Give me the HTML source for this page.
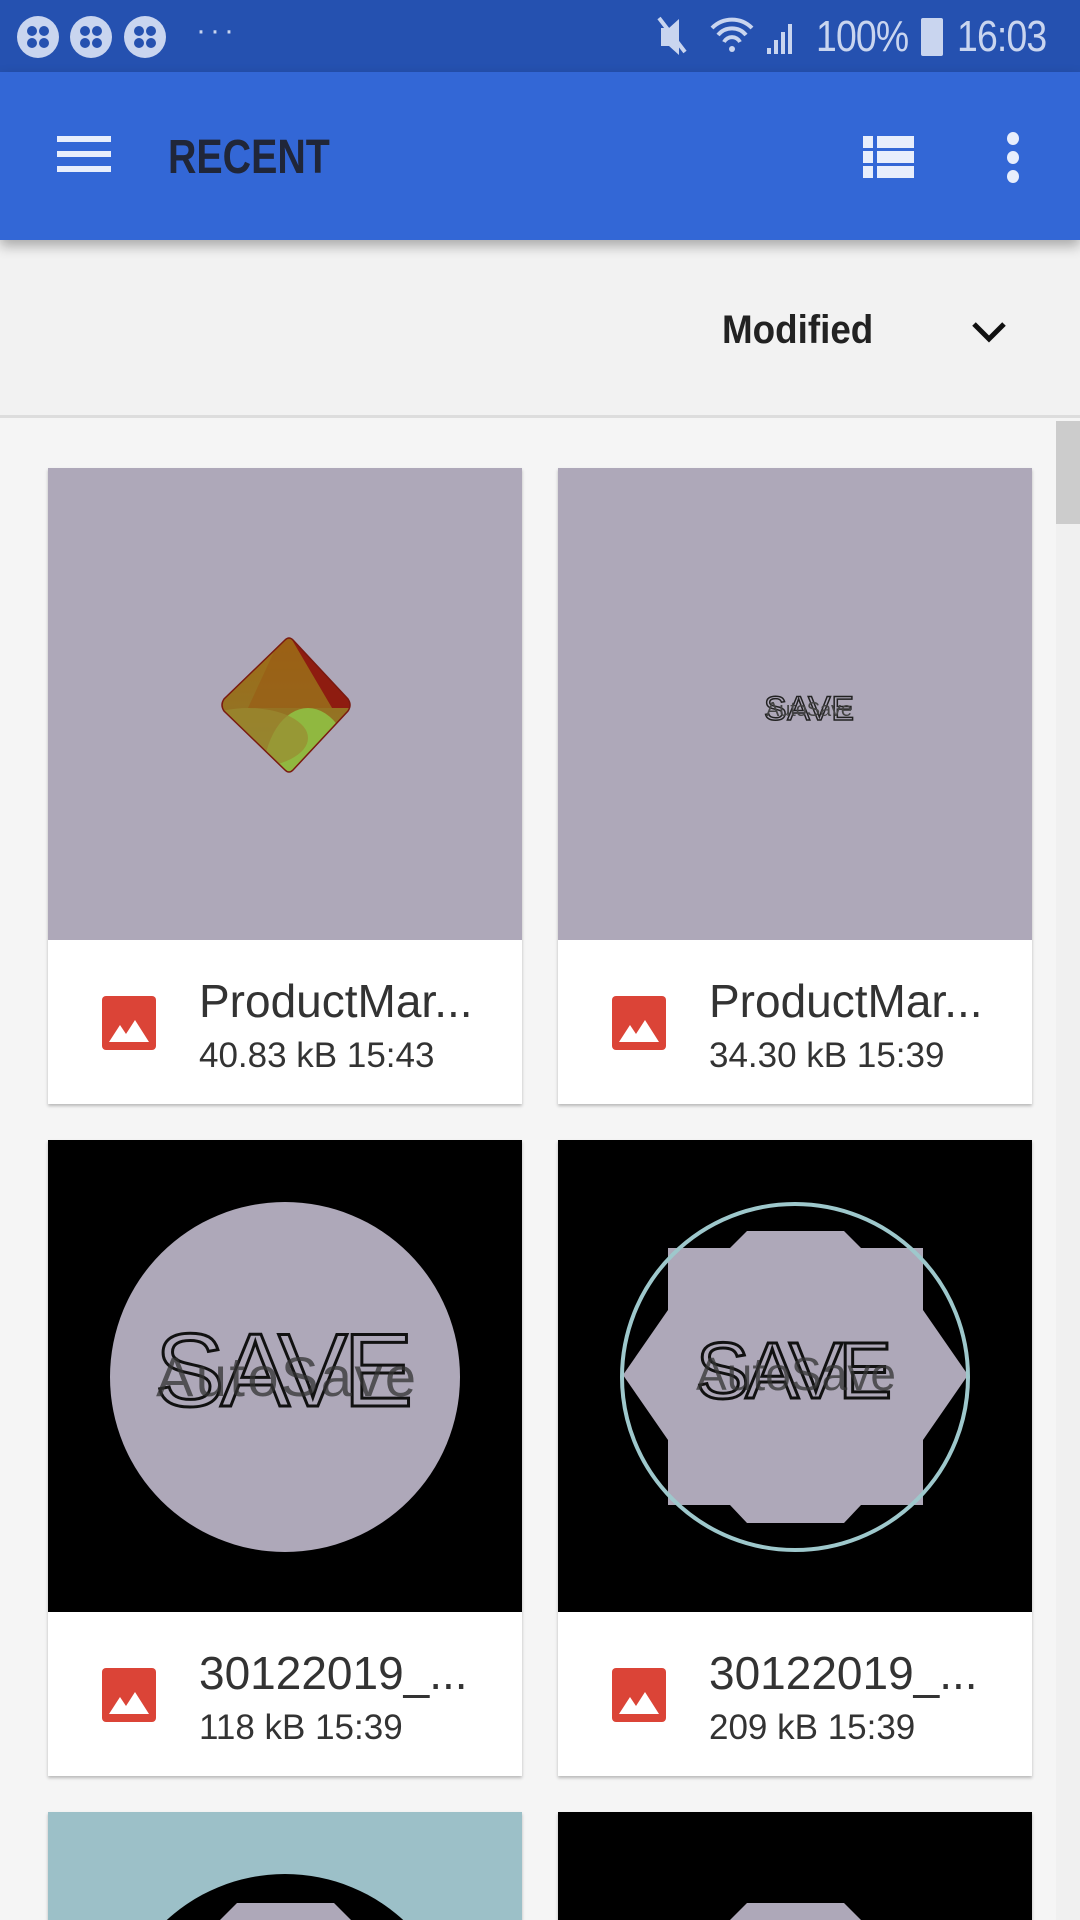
<!DOCTYPE html>
<html><head><meta charset="utf-8"><style>
*{margin:0;padding:0;box-sizing:border-box}
body{width:1080px;height:1920px;overflow:hidden;background:#f5f5f5;font-family:"Liberation Sans",sans-serif;position:relative}
.sb{position:absolute;left:0;top:0;width:1080px;height:72px;background:#2551b0;color:#c9d5ef}
.tb{position:absolute;left:0;top:72px;width:1080px;height:168px;background:#3367d6;box-shadow:0 6px 12px rgba(0,0,0,.3);z-index:2}
.sort{position:absolute;left:0;top:240px;width:1080px;height:178px;background:#f2f2f2;border-bottom:3px solid #ddd}
.card{position:absolute;width:474px;background:#fff;box-shadow:0 2px 3px rgba(0,0,0,.25);overflow:hidden}
.img{position:absolute;left:0;top:0;width:474px;height:472px;overflow:hidden}
.ic{position:absolute;left:54px;width:54px;height:54px;background:#db4437;border-radius:4px}
.t{position:absolute;left:151px;font-size:46px;color:#333;white-space:nowrap}
.s{position:absolute;left:151px;font-size:35px;color:#333;white-space:nowrap}
</style></head><body>
<div class="sb">
 <svg width="180" height="72" style="position:absolute;left:14px;top:0">
  <g fill="#c9d5ef"><ellipse cx="24" cy="37" rx="21" ry="21"/><ellipse cx="77" cy="37" rx="21" ry="21"/><ellipse cx="131" cy="37" rx="21" ry="21"/></g>
  <g fill="#2551b0"><circle cx="18" cy="31" r="5"/><circle cx="30" cy="31" r="5"/><circle cx="18" cy="43" r="5"/><circle cx="30" cy="43" r="5"/>
  <circle cx="71" cy="31" r="5"/><circle cx="83" cy="31" r="5"/><circle cx="71" cy="43" r="5"/><circle cx="83" cy="43" r="5"/>
  <circle cx="125" cy="31" r="5"/><circle cx="137" cy="31" r="5"/><circle cx="125" cy="43" r="5"/><circle cx="137" cy="43" r="5"/></g>
 </svg>
 <div style="position:absolute;left:196px;top:14px;font-size:30px;letter-spacing:4px">···</div>
 <svg width="160" height="72" style="position:absolute;left:655px;top:0">
  <path d="M6 28h8l10-9v36l-10-9H6z" fill="#c9d5ef"/><path d="M4 18l26 34" stroke="#c9d5ef" stroke-width="4"/>
  <path d="M57 28a28 28 0 0 1 40 0M63 35a18 18 0 0 1 28 0M69 42a9 9 0 0 1 16 0" stroke="#c9d5ef" stroke-width="4" fill="none"/>
  <circle cx="77" cy="49" r="3" fill="#c9d5ef"/>
  <path d="M112 54h4v-6h-4zM119 54h4v-14h-4zM126 54h4v-22h-4zM133 54h4v-30h-4z" fill="#c9d5ef"/>
 </svg>
 <div style="position:absolute;left:816px;top:12px;font-size:44px;letter-spacing:-1px;transform:scaleX(.85);transform-origin:left">100%</div>
 <div style="position:absolute;left:921px;top:18px;width:22px;height:38px;background:#c9d5ef;border-radius:2px"></div>
 <div style="position:absolute;left:957px;top:12px;font-size:44px;letter-spacing:-1px;transform:scaleX(.85);transform-origin:left">16:03</div>
</div>
<div class="tb">
 <div style="position:absolute;left:57px;top:64px;width:54px;height:6px;background:#e8eefc;box-shadow:0 15px 0 #e8eefc,0 30px 0 #e8eefc"></div>
 <div style="position:absolute;left:168px;top:58px;font-size:48px;font-weight:bold;color:#202638;transform:scaleX(.82);transform-origin:left">RECENT</div>
 <svg width="54" height="46" style="position:absolute;left:863px;top:62px"><g fill="#e8eefc"><rect x="0" y="2" width="10" height="12"/><rect x="14" y="2" width="37" height="12"/><rect x="0" y="17" width="10" height="12"/><rect x="14" y="17" width="37" height="12"/><rect x="0" y="32" width="10" height="12"/><rect x="14" y="32" width="37" height="12"/></g></svg>
 <div style="position:absolute;left:1007px;top:60px;width:12px;height:13px;background:#e8eefc;border-radius:50%;box-shadow:0 19px 0 #e8eefc,0 38px 0 #e8eefc"></div>
</div>
<div class="sort">
 <div style="position:absolute;left:722px;top:68px;font-size:40px;font-weight:bold;color:#222;transform:scaleX(.92);transform-origin:left">Modified</div>
 <svg width="40" height="30" style="position:absolute;left:970px;top:78px"><path d="M4 6l15 15 15-15" stroke="#111" stroke-width="5" fill="none"/></svg>
</div>
<div style="position:absolute;left:1056px;top:421px;width:24px;height:1499px;background:#f0f0f0"></div>
<div style="position:absolute;left:1056px;top:421px;width:24px;height:103px;background:#ccc"></div>

<div class="card" style="left:48px;top:468px;height:636px">
 <div class="img" style="background:#aea8b9">
  <svg width="474" height="472"><defs><linearGradient id="g1" x1="0" y1="0" x2="0" y2="1"><stop offset="0" stop-color="#a06a14"/><stop offset="1" stop-color="#8a7a30"/></linearGradient>
  <clipPath id="cp"><path d="M237 172Q241 168 245 172L300 231Q304 237 300 243L245 302Q241 306 237 302L176 243Q172 237 176 231z"/></clipPath></defs>
  <g clip-path="url(#cp)">
   <rect x="160" y="160" width="160" height="160" fill="url(#g1)"/>
   <path d="M237 160L320 160 320 240 284 240z" fill="#8e1c10"/>
   <path d="M237 160L284 240 200 240z" fill="#9a5a14" opacity=".6"/>
   <ellipse cx="260" cy="310" rx="45" ry="70" fill="#90b840"/>
   <ellipse cx="200" cy="270" rx="60" ry="30" fill="#9a8a30" opacity=".7"/>
  </g>
  <path d="M237 172Q241 168 245 172L300 231Q304 237 300 243L245 302Q241 306 237 302L176 243Q172 237 176 231z" fill="none" stroke="#7a1a10" stroke-width="1.5"/>
  </svg>
 </div>
 <div class="ic" style="top:528px"><svg width="54" height="54"><path d="M7 46l11-17 6 9 9-14 14 22z" fill="#fff"/></svg></div>
 <div class="t" style="top:506px">ProductMar...</div>
 <div class="s" style="top:568px">40.83 kB 15:43</div>
</div>
<div class="card" style="left:558px;top:468px;height:636px">
 <div class="img" style="background:#aea8b9">
  <svg width="474" height="472"><text x="251" y="252" text-anchor="middle" font-family="Liberation Sans" font-size="34" fill="none" stroke="#222" stroke-width="1.5" textLength="90">SAVE</text>
  <text x="251" y="248" text-anchor="middle" font-family="Liberation Sans" font-size="20" fill="#444" textLength="86">AutoSave</text></svg>
 </div>
 <div class="ic" style="top:528px"><svg width="54" height="54"><path d="M7 46l11-17 6 9 9-14 14 22z" fill="#fff"/></svg></div>
 <div class="t" style="top:506px">ProductMar...</div>
 <div class="s" style="top:568px">34.30 kB 15:39</div>
</div>
<div class="card" style="left:48px;top:1140px;height:636px">
 <div class="img" style="background:#000">
  <svg width="474" height="472"><ellipse cx="237" cy="237" rx="175" ry="175" fill="#aea8b9"/>
  <text x="236" y="266" text-anchor="middle" font-family="Liberation Sans" font-size="104" fill="none" stroke="#111" stroke-width="3" textLength="258">SAVE</text>
  <text x="238" y="256" text-anchor="middle" font-family="Liberation Sans" font-size="56" fill="#333" opacity=".75" textLength="260">AutoSave</text></svg>
 </div>
 <div class="ic" style="top:528px"><svg width="54" height="54"><path d="M7 46l11-17 6 9 9-14 14 22z" fill="#fff"/></svg></div>
 <div class="t" style="top:506px">30122019_...</div>
 <div class="s" style="top:568px">118 kB 15:39</div>
</div>
<div class="card" style="left:558px;top:1140px;height:636px">
 <div class="img" style="background:#000">
  <svg width="474" height="472"><path d="M189 91H286L303 108H365V170L410 235 365 300V365H303L286 383H189L172 365H110V300L65 235 110 170V108H172z" fill="#aea8b9"/>
  <circle cx="237" cy="237" r="173" fill="none" stroke="#9ec8cc" stroke-width="4"/>
  <text x="236" y="258" text-anchor="middle" font-family="Liberation Sans" font-size="80" fill="none" stroke="#111" stroke-width="3" textLength="196">SAVE</text>
  <text x="238" y="250" text-anchor="middle" font-family="Liberation Sans" font-size="46" fill="#333" opacity=".75" textLength="200">AutoSave</text></svg>
 </div>
 <div class="ic" style="top:528px"><svg width="54" height="54"><path d="M7 46l11-17 6 9 9-14 14 22z" fill="#fff"/></svg></div>
 <div class="t" style="top:506px">30122019_...</div>
 <div class="s" style="top:568px">209 kB 15:39</div>
</div>
<div class="card" style="left:48px;top:1812px;height:108px">
 <div class="img" style="background:#9cc0c8">
  <svg width="474" height="108"><ellipse cx="237" cy="237" rx="175" ry="175" fill="#000"/><path d="M189 91H286L303 108H172z" fill="#aea8b9"/></svg>
 </div>
</div>
<div class="card" style="left:558px;top:1812px;height:108px">
 <div class="img" style="background:#000">
  <svg width="474" height="108"><path d="M189 91H286L303 108H172z" fill="#aea8b9"/></svg>
 </div>
</div>
</body></html>
